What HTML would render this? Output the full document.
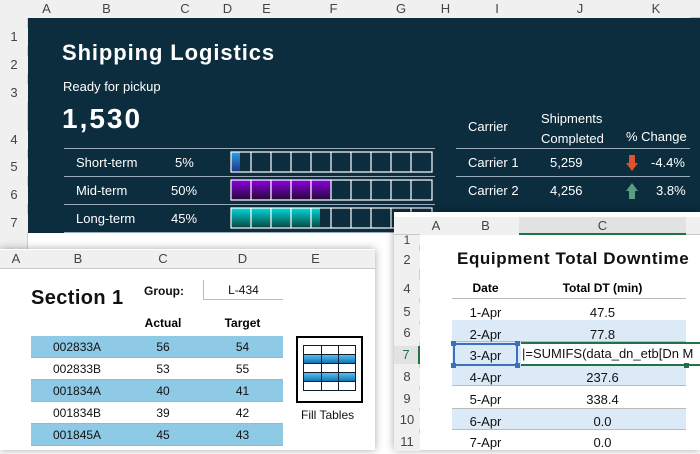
<!DOCTYPE html>
<html><head><style>
*{margin:0;padding:0;box-sizing:border-box}
body{width:700px;height:450px;overflow:hidden;background:#fff;font-family:"Liberation Sans",sans-serif;position:relative}
.a{position:absolute}
.hd{background:#f0f0f0;color:#444;font-size:13px;text-align:center;line-height:18px}
.w{color:#fff}
.c{text-align:center}
</style></head><body>
<div class="a hd" style="left:0;top:0;width:700px;height:18px;border-bottom:1px solid #c8c8c8"></div>
<div class="a hd" style="left:0;top:18px;width:28px;height:432px;border-right:1px solid #d0d0d0"></div>
<div class="a" style="left:0;top:0;width:28px;height:18px;background:#f0f0f0"></div>
<div class="a hd" style="left:28px;top:0;width:37px">A</div>
<div class="a hd" style="left:65px;top:0;width:83px">B</div>
<div class="a hd" style="left:148px;top:0;width:74px">C</div>
<div class="a hd" style="left:222px;top:0;width:11px">D</div>
<div class="a hd" style="left:233px;top:0;width:67px">E</div>
<div class="a hd" style="left:300px;top:0;width:67px">F</div>
<div class="a hd" style="left:367px;top:0;width:68px">G</div>
<div class="a hd" style="left:435px;top:0;width:21px">H</div>
<div class="a hd" style="left:456px;top:0;width:82px">I</div>
<div class="a hd" style="left:538px;top:0;width:84px">J</div>
<div class="a hd" style="left:622px;top:0;width:68px">K</div>
<div class="a hd" style="left:0;top:28px;width:28px">1</div>
<div class="a hd" style="left:0;top:56px;width:28px">2</div>
<div class="a hd" style="left:0;top:84px;width:28px">3</div>
<div class="a hd" style="left:0;top:131px;width:28px">4</div>
<div class="a hd" style="left:0;top:158px;width:28px">5</div>
<div class="a hd" style="left:0;top:186px;width:28px">6</div>
<div class="a hd" style="left:0;top:214px;width:28px">7</div>
<div class="a" style="left:28px;top:18px;width:672px;height:215px;background:#0b2d3e"></div>
<div class="a w" style="left:62px;top:40px;font-size:22px;font-weight:bold;letter-spacing:0.9px">Shipping Logistics</div>
<div class="a w" style="left:63px;top:79px;font-size:13px">Ready for pickup</div>
<div class="a w" style="left:62px;top:103px;font-size:28px;font-weight:bold;letter-spacing:2px">1,530</div>
<div class="a" style="left:64px;top:148px;width:371px;border-top:1px solid #9ab"></div>
<div class="a" style="left:64px;top:176px;width:371px;border-top:1px solid #9ab"></div>
<div class="a" style="left:64px;top:204px;width:371px;border-top:1px solid #9ab"></div>
<div class="a" style="left:64px;top:232px;width:371px;border-top:1px solid #9ab"></div>
<div class="a w" style="left:76px;top:155px;font-size:13px">Short-term</div>
<div class="a w" style="left:175px;top:155px;font-size:13px">5%</div>
<div class="a w" style="left:76px;top:183px;font-size:13px">Mid-term</div>
<div class="a w" style="left:171px;top:183px;font-size:13px">50%</div>
<div class="a w" style="left:76px;top:211px;font-size:13px">Long-term</div>
<div class="a w" style="left:171px;top:211px;font-size:13px">45%</div>
<div class="a" style="left:231px;top:152px;width:9px;height:19px;background:linear-gradient(#2aa0e8,#23368a)"></div>
<div class="a" style="left:231px;top:180px;width:100px;height:19px;background:linear-gradient(#8a00e0,#2a0840)"></div>
<div class="a" style="left:231px;top:208px;width:89px;height:19px;background:linear-gradient(#00d8d8,#0a4a48)"></div>
<svg class="a" style="left:230px;top:151px" width="203" height="82">
<g fill="none" stroke="#fff" stroke-width="1.2">
<rect x="1" y="1" width="201" height="20"/><rect x="1" y="29" width="201" height="20"/><rect x="1" y="57" width="201" height="20"/>
<path d="M21 1v20M41 1v20M61 1v20M81 1v20M101 1v20M121 1v20M141 1v20M161 1v20M181 1v20M21 29v20M41 29v20M61 29v20M81 29v20M101 29v20M121 29v20M141 29v20M161 29v20M181 29v20M21 57v20M41 57v20M61 57v20M81 57v20M101 57v20M121 57v20M141 57v20M161 57v20M181 57v20"/>
</g></svg>
<div class="a w" style="left:468px;top:119px;font-size:13px">Carrier</div>
<div class="a w" style="left:541px;top:109px;font-size:13px;line-height:20px">Shipments<br>Completed</div>
<div class="a w" style="left:626px;top:129px;font-size:13px">% Change</div>
<div class="a" style="left:456px;top:148px;width:234px;border-top:1px solid #9ab"></div>
<div class="a" style="left:456px;top:176px;width:234px;border-top:1px solid #9ab"></div>
<div class="a w" style="left:468px;top:155px;font-size:13px">Carrier 1</div>
<div class="a w" style="left:550px;top:155px;font-size:13px">5,259</div>
<div class="a w" style="left:651px;top:155px;font-size:13px">-4.4%</div>
<div class="a w" style="left:468px;top:183px;font-size:13px">Carrier 2</div>
<div class="a w" style="left:550px;top:183px;font-size:13px">4,256</div>
<div class="a w" style="left:656px;top:183px;font-size:13px">3.8%</div>
<svg class="a" style="left:625px;top:154px" width="14" height="18"><path d="M4 1h6v8h3l-6 8-6-8h3z" fill="#e0532a"/></svg>
<svg class="a" style="left:625px;top:182px" width="14" height="18"><path d="M4 17h6v-8h3l-6-8-6 8h3z" fill="#5aa080"/></svg>

<div class="a" style="left:0;top:249px;width:375px;height:201px;background:#fff;box-shadow:0 0 8px rgba(0,0,0,.35)"></div>
<div class="a hd" style="left:0;top:250px;width:375px;height:19px;border-bottom:1px solid #c8c8c8"></div>
<div class="a hd" style="left:0;top:250px;width:32px">A</div>
<div class="a hd" style="left:32px;top:250px;width:92px">B</div>
<div class="a hd" style="left:124px;top:250px;width:78px">C</div>
<div class="a hd" style="left:202px;top:250px;width:81px">D</div>
<div class="a hd" style="left:283px;top:250px;width:65px">E</div>
<div class="a" style="left:31px;top:287px;font-size:20px;font-weight:bold;color:#111;letter-spacing:0.4px">Section 1</div>
<div class="a" style="left:144px;top:284px;font-size:12px;font-weight:bold;color:#111">Group:</div>
<div class="a c" style="left:203px;top:280px;width:80px;height:20px;border-left:1px solid #bbb;border-bottom:1px solid #bbb;font-size:12px;line-height:20px;color:#111">L-434</div>
<div class="a c" style="left:124px;top:316px;width:78px;font-size:12px;font-weight:bold">Actual</div>
<div class="a c" style="left:202px;top:316px;width:81px;font-size:12px;font-weight:bold">Target</div>
<div class="a" style="left:31px;top:336px;width:252px;height:110px;font-size:12px;color:#111">
<div style="height:22px;background:#8ec9e6;border-bottom:1px solid #9bb;display:flex;line-height:22px"><span style="width:93px;padding-left:22px">002833A</span><span style="width:78px" class="c">56</span><span style="width:81px" class="c">54</span></div>
<div style="height:22px;background:#fff;border-bottom:1px solid #9bb;display:flex;line-height:22px"><span style="width:93px;padding-left:22px">002833B</span><span style="width:78px" class="c">53</span><span style="width:81px" class="c">55</span></div>
<div style="height:22px;background:#8ec9e6;border-bottom:1px solid #9bb;display:flex;line-height:22px"><span style="width:93px;padding-left:22px">001834A</span><span style="width:78px" class="c">40</span><span style="width:81px" class="c">41</span></div>
<div style="height:22px;background:#fff;border-bottom:1px solid #9bb;display:flex;line-height:22px"><span style="width:93px;padding-left:22px">001834B</span><span style="width:78px" class="c">39</span><span style="width:81px" class="c">42</span></div>
<div style="height:22px;background:#8ec9e6;border-bottom:1px solid #9bb;display:flex;line-height:22px"><span style="width:93px;padding-left:22px">001845A</span><span style="width:78px" class="c">45</span><span style="width:81px" class="c">43</span></div>
</div>
<svg class="a" style="left:296px;top:336px" width="67" height="67">
<rect x="1" y="1" width="65" height="65" fill="#fff" stroke="#000" stroke-width="2"/>
<defs><linearGradient id="g" x1="0" y1="0" x2="0" y2="1"><stop offset="0" stop-color="#6cc4f0"/><stop offset="1" stop-color="#0a78b8"/></linearGradient></defs>
<rect x="7" y="18" width="53" height="9" fill="url(#g)"/><rect x="7" y="36" width="53" height="9" fill="url(#g)"/>
<g stroke="#0a2030" stroke-width="1" fill="none"><rect x="7.5" y="9.5" width="52" height="45"/><path d="M7 18.5h53M7 27.5h53M7 36.5h53M7 45.5h53M25.5 9v46M42.5 9v46"/></g>
</svg>
<div class="a" style="left:301px;top:408px;font-size:12px;color:#111">Fill Tables</div>

<div class="a" style="left:394px;top:212px;width:306px;height:238px;background:#fff;box-shadow:0 0 8px rgba(0,0,0,.35)"></div>
<div class="a hd" style="left:394px;top:217px;width:306px;height:18px;border-bottom:1px solid #c8c8c8"></div>
<div class="a hd" style="left:394px;top:235px;width:26px;height:215px;border-right:1px solid #d0d0d0"></div>
<div class="a hd" style="left:420px;top:217px;width:32px">A</div>
<div class="a hd" style="left:452px;top:217px;width:67px">B</div>
<div class="a hd" style="left:519px;top:217px;width:167px;background:#e2e2e2;border-bottom:2px solid #217346;height:18px">C</div>
<div class="a hd" style="left:394px;top:235px;width:26px;line-height:10px;font-size:12px">1</div>
<div class="a hd" style="left:394px;top:251px;width:26px">2</div>
<div class="a hd" style="left:394px;top:280px;width:26px">4</div>
<div class="a hd" style="left:394px;top:303px;width:26px">5</div>
<div class="a hd" style="left:394px;top:324px;width:26px">6</div>
<div class="a hd" style="left:394px;top:346px;width:26px;background:#e2e2e2;border-right:2px solid #217346;color:#217346">7</div>
<div class="a hd" style="left:394px;top:368px;width:26px">8</div>
<div class="a hd" style="left:394px;top:390px;width:26px">9</div>
<div class="a hd" style="left:394px;top:411px;width:26px">10</div>
<div class="a hd" style="left:394px;top:433px;width:26px">11</div>
<div class="a" style="left:457px;top:249px;font-size:17px;font-weight:bold;color:#111;letter-spacing:0.6px;white-space:nowrap">Equipment Total Downtime</div>
<div class="a c" style="left:452px;top:281px;width:67px;font-size:12px;font-weight:bold">Date</div>
<div class="a c" style="left:519px;top:281px;width:167px;font-size:12px;font-weight:bold">Total DT (min)</div>
<div class="a" style="left:452px;top:298px;width:234px;border-top:1px solid #bbb"></div>
<div class="a" style="left:452px;top:320px;width:234px;height:22px;background:#dce9f6;border-bottom:1px solid #bbb"></div>
<div class="a" style="left:452px;top:342px;width:234px;height:23px;background:#dce9f6"></div>
<div class="a" style="left:452px;top:365px;width:234px;height:21px;background:#dce9f6;border-top:1px solid #bbb;border-bottom:1px solid #bbb"></div>
<div class="a" style="left:452px;top:408px;width:234px;height:22px;background:#dce9f6;border-top:1px solid #bbb;border-bottom:1px solid #bbb"></div>
<div class="a" style="left:452px;top:302px;width:234px;font-size:13px;color:#111;line-height:21.7px">
<div style="display:flex"><span style="width:67px" class="c">1-Apr</span><span style="width:167px" class="c">47.5</span></div>
<div style="display:flex"><span style="width:67px" class="c">2-Apr</span><span style="width:167px" class="c">77.8</span></div>
<div style="display:flex"><span style="width:67px" class="c">3-Apr</span><span style="width:167px"></span></div>
<div style="display:flex"><span style="width:67px" class="c">4-Apr</span><span style="width:167px" class="c">237.6</span></div>
<div style="display:flex"><span style="width:67px" class="c">5-Apr</span><span style="width:167px" class="c">338.4</span></div>
<div style="display:flex"><span style="width:67px" class="c">6-Apr</span><span style="width:167px" class="c">0.0</span></div>
<div style="display:flex"><span style="width:67px" class="c">7-Apr</span><span style="width:167px" class="c">0.0</span></div>
</div>
<div class="a" style="left:453px;top:343px;width:65px;height:23px;border:2px solid #3d6fbf"></div>
<div class="a" style="left:451px;top:341px;width:5px;height:5px;background:#3d6fbf"></div>
<div class="a" style="left:515px;top:341px;width:5px;height:5px;background:#3d6fbf"></div>
<div class="a" style="left:451px;top:363px;width:5px;height:5px;background:#3d6fbf"></div>
<div class="a" style="left:515px;top:363px;width:5px;height:5px;background:#3d6fbf"></div>
<div class="a" style="left:521px;top:342px;width:179px;height:24px;background:#fff;border-top:2px solid #217346;border-bottom:2px solid #217346"></div>
<div class="a" style="left:684px;top:363px;width:5px;height:5px;background:#217346"></div>
<div class="a" style="left:522px;top:346px;font-size:13px;color:#111;white-space:nowrap">|=SUMIFS(data_dn_etb[Dn M</div>
</body></html>
